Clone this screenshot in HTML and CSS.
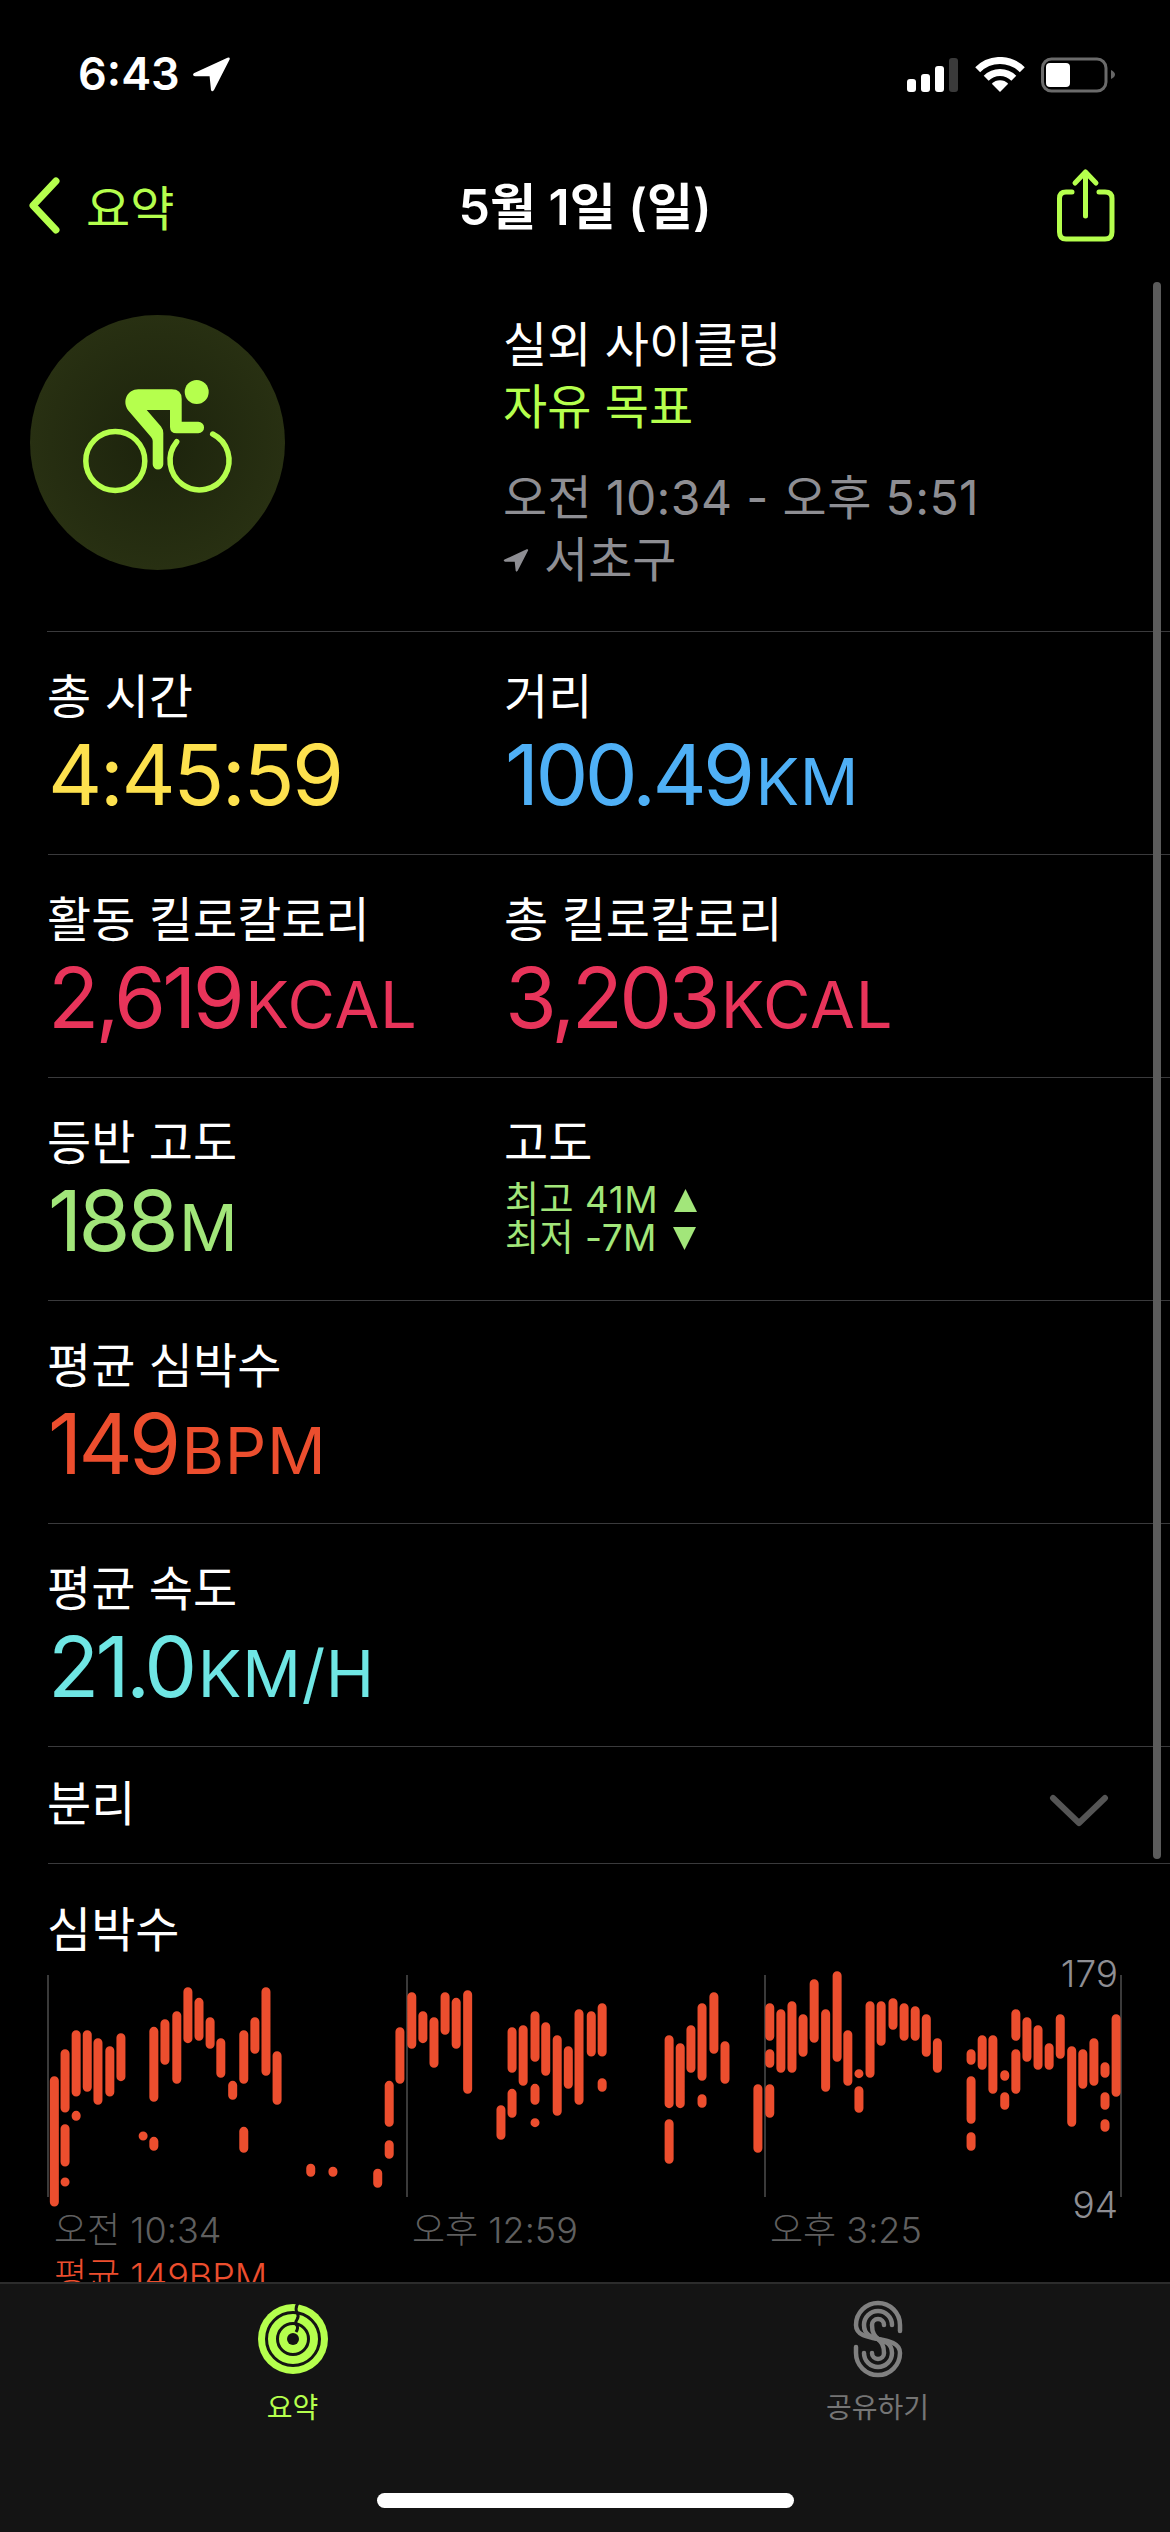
FILE: index.html
```html
<!DOCTYPE html>
<html lang="ko">
<head>
<meta charset="utf-8">
<title>5월 1일 (일)</title>
<link rel="stylesheet" href="styles.css">
</head>
<body>
<div class="screen">
  <header class="status">
    <div class="clock">
      <span>6:43</span>
      <svg class="loc-arrow" viewBox="192 57 39 37"><path d="M227.500 58.700 194.300 74Q191.500 76 195 77.300L209.600 77.300 211 91Q212 93.500 214 91L229.600 60.500Q230.300 57.800 227.500 58.700Z"/></svg>
    </div>
    <svg class="status-icons" viewBox="907 56 208 36">
      <rect class="on" x="907" y="78" width="9" height="13" rx="3"/>
      <rect class="on" x="921" y="73" width="9" height="18" rx="3"/>
      <rect class="on" x="935" y="65" width="9" height="26" rx="3"/>
      <rect class="off" x="949" y="57" width="9" height="34" rx="3"/>
      <path class="wifi" d="M977.700 68.700A31.500 31.500 0 0 1 1022.300 68.700M986.200 77.200A19.500 19.500 0 0 1 1013.800 77.200"/>
      <path class="on" d="M1000 91 991.800 82.800A11.500 11.500 0 0 1 1008.200 82.800Z"/>
      <rect class="batt" x="1042.500" y="58" width="63.500" height="32" rx="9"/>
      <rect class="on" x="1046" y="62" width="24" height="24" rx="4"/>
      <path class="nub" d="M1111 69Q1115 71 1115 73.500 1115 76 1111 78Z"/>
    </svg>
  </header>

  <nav class="nav">
    <div class="back">
      <svg class="chevron" viewBox="0 0 33 57"><path d="M28 4 5 28.500 28 53"/></svg>
      <span>요약</span>
    </div>
    <h1 class="title">5월 1일 (일)</h1>
    <svg class="share" viewBox="1056 167 60 75"><path d="M1072 191H1066Q1059.500 191 1059.500 197.500V231Q1059.500 238 1066 238H1105Q1112 238 1112 231V197.500Q1112 191 1105 191H1099M1085.500 215V171M1075 182 1085.500 171 1096 182"/></svg>
  </nav>

  <main class="content">
    <section class="summary">
      <svg class="badge" viewBox="30 315 255 255">
        <defs>
          <radialGradient id="badge-fill">
            <stop offset="0" stop-color="#1c230c"/>
            <stop offset="1" stop-color="#283012"/>
          </radialGradient>
        </defs>
        <circle cx="157.500" cy="442.500" r="127.500" fill="url(#badge-fill)"/>
        <circle class="rider" cx="196.700" cy="392" r="12"/>
        <path class="rider" d="M138.300 389.300H171.700Q181.700 389.300 181.700 399V421.700H198.300A5.800 5.800 0 0 1 198.300 433.300H176.700Q170 433.300 170 427V410H146.700L161 426.500Q163.300 429.500 163.300 433V464.300A5.300 5.300 0 0 1 152.700 464.300V441Q152.700 439 151 437L128.300 410.500C121.500 401 127.500 389.300 138.300 389.300Z"/>
        <circle class="wheel" cx="115.300" cy="461" r="29.500"/>
        <path class="wheel" d="M176.700 441.700A29.500 29.500 0 1 0 212.700 434"/>
      </svg>
      <div class="summary-text">
        <div class="line white">실외 사이클링</div>
        <div class="line lime">자유 목표</div>
        <div class="line gray gap times">오전 10:34 - 오후 5:51</div>
        <div class="line gray place">
          <svg class="loc-small" viewBox="192 57 39 37"><path d="M227.500 58.700 194.300 74Q191.500 76 195 77.300L209.600 77.300 211 91Q212 93.500 214 91L229.600 60.500Q230.300 57.800 227.500 58.700Z"/></svg>
          <span>서초구</span>
        </div>
      </div>
    </section>

    <section class="row two">
      <div>
        <div class="label">총 시간</div>
        <div class="value yellow"><span class="num clock-num">4:45:59</span></div>
      </div>
      <div>
        <div class="label">거리</div>
        <div class="value blue"><span class="num">100.49</span><span class="unit">KM</span></div>
      </div>
    </section>

    <section class="row two">
      <div>
        <div class="label">활동 킬로칼로리</div>
        <div class="value pink"><span class="num">2,619</span><span class="unit">KCAL</span></div>
      </div>
      <div>
        <div class="label">총 킬로칼로리</div>
        <div class="value pink"><span class="num">3,203</span><span class="unit">KCAL</span></div>
      </div>
    </section>

    <section class="row two">
      <div>
        <div class="label">등반 고도</div>
        <div class="value green"><span class="num">188</span><span class="unit">M</span></div>
      </div>
      <div>
        <div class="label">고도</div>
        <div class="elevation">
          <div class="elev-line">최고 41M <svg class="tri" viewBox="0 0 25 25"><path d="M12.500 1 24 24H1Z"/></svg></div>
          <div class="elev-line">최저 -7M <svg class="tri" viewBox="0 0 25 25"><path d="M1 1H24L12.500 24Z"/></svg></div>
        </div>
      </div>
    </section>

    <section class="row">
      <div class="label">평균 심박수</div>
      <div class="value orange"><span class="num">149</span><span class="unit">BPM</span></div>
    </section>

    <section class="row">
      <div class="label">평균 속도</div>
      <div class="value teal"><span class="num">21.0</span><span class="unit">KM/H</span></div>
    </section>

    <section class="splits">
      <div class="label">분리</div>
      <svg class="expand" viewBox="0 0 60 34"><path d="M4 4 30 29 56 4"/></svg>
    </section>

    <section class="heart">
      <div class="label heart-title">심박수</div>
      <div class="chart">
        <svg class="plot" viewBox="0 0 1170 222">
          <path class="grid" d="M48 0V222M407 0V222M765 0V222M1121 0V222"/>
          <g transform="translate(0 -75) scale(.3827 .3333)">
            <path class="bars" d="M142 542V906M170 461V624M170 686V786M170 846v.1M199 404V576M199 646v3M228 404V562M256 428V601M287 452V576M316 413V530M374 708v.1M402 394V592M402 724V739M431 371V481M462 347V538M491 275V416M520 307V409M549 365V433M577 428V520M608 556V586M637 404V538M637 694V745M666 365V448M695 275V514M724 467V601M812 805V817M870 814V817M987 820V850M1017 556V667M1017 734V763M1045 395V538M1076 290V433M1105 347V416M1134 365V490M1163 290V391M1192 307V433M1222 284V568M1309 629V706M1338 395V505M1338 580V640M1367 389V544M1398 347V472M1398 565V601M1398 668v.1M1426 380V514M1456 419V634M1485 452V553M1513 341V601M1545 347V456"/>
          </g>
          <g transform="translate(570 -75) scale(.3827 .3333)">
            <path class="bars" d="M84 323V456M84 548V562M259 419V611M259 671V778M288 443V611M316 389V505M345 323V529M345 596V610M376 290V448M405 437V538M491 566V745M522 323V409M522 461V490M522 566V640M551 341V505M580 317V505M609 356V457M638 251V415M668 341V562M698 227V472M726 404V544M755 521v.1M755 572V625M784 317V520M813 317V424M844 308V376M873 323V409M902 332V409M931 356V457M960 428V505M1048 461V481M1048 542V658M1048 710V739M1077 419V496M1105 419V568M1136 524V529M1136 590V616M1165 341V409M1165 461V568M1194 365V472M1223 389V496M1252 443V496M1281 356V463M1311 452V667M1340 461V553M1369 428V544M1398 500V520M1398 590V616M1398 671V682M1427 356V577"/>
          </g>
        </svg>
        <span class="bound bound-high">179</span>
        <span class="bound bound-low">94</span>
      </div>
      <div class="axis">
        <span>오전 10:34</span>
        <span>오후 12:59</span>
        <span>오후 3:25</span>
      </div>
      <div class="average">평균 149BPM</div>
    </section>
  </main>

  <footer class="tabbar">
    <div class="tabs">
      <div class="tab active">
        <svg class="tab-icon" viewBox="0 0 80 80">
          <circle class="rings-disc" cx="40" cy="40" r="35"/>
          <path class="rings-cut" d="M45 4Q41.500 10 44.500 14.500 46 17 44 20.500 41.500 24 44 26.500 45.500 29 43 33"/>
          <circle class="rings-cut" cx="40" cy="40" r="26.500"/>
          <circle class="rings-cut" cx="40" cy="40" r="15.500"/>
          <circle class="rings-hole" cx="40" cy="40" r="6"/>
        </svg>
        <span>요약</span>
      </div>
      <div class="tab">
        <svg class="tab-icon" viewBox="837 2299 80 80">
          <path class="share-s" d="M899 2331V2325A22 22 0 0 0 855 2325C855 2345 899 2333 899 2353A22 22 0 0 1 855 2353V2347"/>
          <path class="share-s" d="M891 2325A14 14 0 0 0 863 2325C863 2344 891 2334 891 2353A14 14 0 0 1 863 2353"/>
          <path class="share-s" d="M883 2325A6 6 0 0 0 871 2325C871 2342 883 2336 883 2353A6 6 0 0 1 871 2353"/>
        </svg>
        <span>공유하기</span>
      </div>
    </div>
    <div class="home-indicator"></div>
  </footer>

  <div class="scrollbar"></div>
</div>
</body>
</html>
```
FILE: styles.css
```css
* { box-sizing: border-box; }

html, body {
  margin: 0;
  background: #000;
}

body {
  font-family: Inter, "Noto Sans CJK KR", sans-serif;
  color: #fff;
}

.screen {
  position: relative;
  width: 1170px;
  height: 2532px;
  display: flex;
  flex-direction: column;
  overflow: hidden;
  background: #000;
}

/* Status bar */
.status {
  flex: none;
  height: 110px;
  padding: 38px 55px 0 78px;
  display: flex;
  align-items: center;
  justify-content: space-between;
}

.clock {
  display: flex;
  align-items: center;
  gap: 12px;
  font-size: 45px;
  font-weight: 600;
  line-height: 40px;
}

.loc-arrow { width: 39px; height: 37px; fill: #fff; }

.status-icons { width: 208px; height: 36px; margin-top: 2px; }
.status-icons .on { fill: #fff; }
.status-icons .off { fill: #3a3a3a; }
.status-icons .wifi { fill: none; stroke: #fff; stroke-width: 7; }
.status-icons .batt { fill: none; stroke: #6b6b6b; stroke-width: 3; }
.status-icons .nub { fill: #666; }

/* Navigation bar */
.nav {
  flex: none;
  height: 190px;
  padding: 0 54px 0 28px;
  display: grid;
  grid-template-columns: 1fr 400px 1fr;
  align-items: center;
}

.back {
  display: flex;
  align-items: center;
  gap: 25px;
  color: #b5ff4d;
  font-size: 48px;
}

.chevron {
  width: 33px;
  height: 57px;
  fill: none;
  stroke: #b5ff4d;
  stroke-width: 7;
  stroke-linecap: round;
  stroke-linejoin: round;
}

.title {
  margin: 3px 0 0;
  padding-left: 26px;
  font-size: 50px;
  font-weight: 600;
  line-height: 60px;
  text-align: center;
  white-space: nowrap;
}

.share {
  justify-self: end;
  width: 60px;
  height: 75px;
  fill: none;
  stroke: #b5ff4d;
  stroke-width: 5;
  stroke-linecap: round;
  stroke-linejoin: round;
}

/* Scrolling content */
.content {
  flex: 1;
  min-height: 0;
  overflow: hidden;
}

.scrollbar {
  position: absolute;
  top: 282px;
  left: 1153px;
  width: 8px;
  height: 1577px;
  border-radius: 4px;
  background: #5b5b5b;
}

.summary {
  height: 332px;
  padding: 14px 0 0 30px;
  display: grid;
  grid-template-columns: 474px 1fr;
  border-bottom: 1px solid #3a3a3c;
  border-image: linear-gradient(90deg, #000 48px, #3a3a3c 48px) 1;
}

.badge { width: 255px; height: 255px; margin-top: 1px; }
.badge .rider { fill: #b5ff4d; }
.badge .wheel {
  fill: none;
  stroke: #b5ff4d;
  stroke-width: 5.500;
  stroke-linecap: round;
}

.line {
  margin-left: -1px;
  font-size: 48px;
  line-height: 62px;
}

.white { color: #fff; }
.lime { color: #b5ff4d; }
.gray { color: #8e8e93; }
.line.gap { margin-top: 29px; }
.times { letter-spacing: .4px; }

.place {
  display: flex;
  align-items: center;
  gap: 15px;
}

.loc-small { width: 26px; height: 25px; fill: #8e8e93; }

.row {
  height: 223.100px;
  margin-left: 48px;
  padding-top: 35px;
  border-bottom: 1px solid #3a3a3c;
}

.two {
  display: grid;
  grid-template-columns: 457px 1fr;
}

.label {
  margin-left: -1px;
  font-size: 48px;
  line-height: 60px;
}

.value {
  height: 90px;
  margin-top: 3px;
  line-height: 90px;
  white-space: nowrap;
}

.num {
  font-size: 84px;
  font-weight: 370;
  letter-spacing: -3.700px;
}

.clock-num { letter-spacing: -2.500px; }

.unit {
  font-size: 65px;
  font-weight: 430;
  letter-spacing: .8px;
  margin-left: 4px;
}

.yellow { color: #fde14e; }
.blue { color: #4fb0f6; }
.pink { color: #e8345a; }
.green { color: #a2e67a; }
.orange { color: #ec4e2e; }
.teal { color: #6fe6e4; }

.elevation {
  margin-top: 8px;
  color: #a2e67a;
}

.elev-line {
  display: flex;
  align-items: center;
  gap: 15px;
  height: 38px;
  font-size: 37px;
  letter-spacing: .5px;
  line-height: 38px;
}

.tri { width: 25px; height: 25px; fill: #a2e67a; }

.splits {
  height: 117px;
  margin-left: 48px;
  padding-right: 61px;
  display: flex;
  align-items: center;
  justify-content: space-between;
  border-bottom: 1px solid #3a3a3c;
}

.splits .label { margin-top: -2px; }

.expand {
  width: 60px;
  height: 34px;
  margin-top: 12px;
  fill: none;
  stroke: #555;
  stroke-width: 6;
  stroke-linecap: round;
  stroke-linejoin: round;
}

/* Heart-rate chart */
.heart { padding-top: 36px; }

.heart-title { padding-left: 48px; }

.chart {
  position: relative;
  height: 222px;
  margin-top: 15px;
}

.plot { display: block; width: 1170px; height: 222px; overflow: visible; }
.plot .grid { fill: none; stroke: #3a3a3a; stroke-width: 2; }
.plot .bars {
  fill: none;
  stroke: #ec4e2e;
  stroke-width: 9;
  stroke-linecap: round;
  vector-effect: non-scaling-stroke;
}

.bound {
  position: absolute;
  right: 52px;
  font-size: 37px;
  font-weight: 300;
  line-height: 40px;
  color: #8e8e93;
}

.bound-high { top: -21px; }
.bound-low { top: 210px; }

.axis {
  margin-top: 12px;
  padding-left: 54px;
  display: grid;
  grid-template-columns: 358px 358px 1fr;
  font-size: 36px;
  font-weight: 300;
  line-height: 42px;
  color: #5f5f5f;
}

.average {
  margin-top: 4px;
  padding-left: 54px;
  font-size: 36px;
  font-weight: 300;
  line-height: 42px;
  color: #ec4e2e;
}

/* Tab bar */
.tabbar {
  flex: none;
  height: 250px;
  display: flex;
  flex-direction: column;
  background: #141414;
  border-top: 2px solid #2c2c2c;
}

.tabs {
  display: grid;
  grid-template-columns: 1fr 1fr;
  padding-top: 15px;
}

.tab {
  display: flex;
  flex-direction: column;
  align-items: center;
  gap: 12px;
  font-size: 28px;
  line-height: 34px;
  color: #757575;
}

.tab.active { color: #b5ff4d; }

.tab-icon { width: 80px; height: 80px; }

.rings-disc { fill: #b5ff4d; }
.rings-cut { fill: none; stroke: #141414; stroke-width: 3; }
.rings-hole { fill: #141414; }

.share-s {
  fill: none;
  stroke: #808080;
  stroke-width: 4.500;
  stroke-linecap: round;
}

.home-indicator {
  width: 417px;
  height: 15px;
  margin: auto auto 24px;
  border-radius: 8px;
  background: #fff;
}
```
